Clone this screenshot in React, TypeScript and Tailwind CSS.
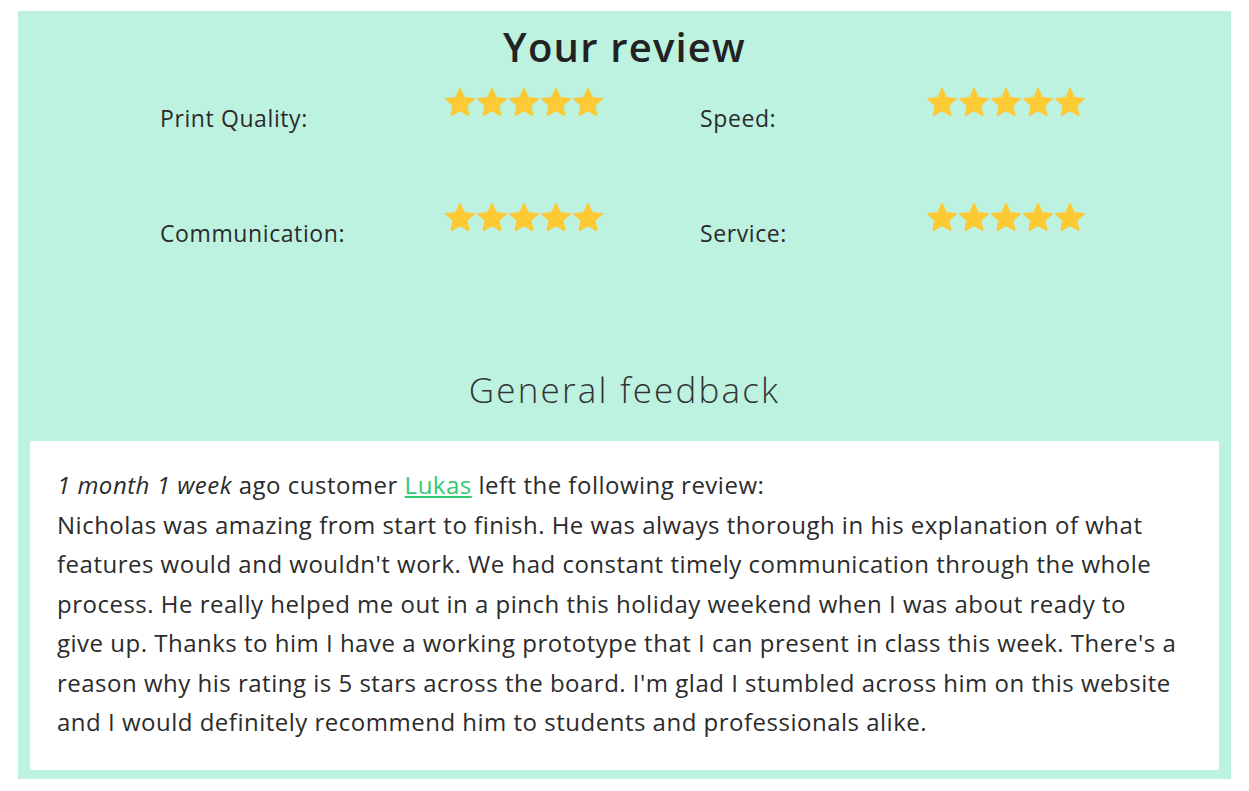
import React from 'react';

const Star = () => (
  <svg width="30" height="28" viewBox="1.6 1.6 20.8 19.6" className="shrink-0">
    <path
      d="M12 2.2l2.9 6.3 6.9.7-5.2 4.6 1.5 6.8L12 17.1l-6.1 3.5 1.5-6.8-5.2-4.6 6.9-.7z"
      fill="#fdc935"
      stroke="#fdc935"
      strokeWidth="1.2"
      strokeLinejoin="round"
    />
  </svg>
);

const Stars = () => (
  <div className="flex gap-[2px]">
    {[0, 1, 2, 3, 4].map((i) => (
      <Star key={i} />
    ))}
  </div>
);

const Rating = ({ label }: { label: string }) => (
  <>
    <div className="pt-[15px] text-[23px] tracking-[0.6px] leading-[30px] text-[#2b2b2b]">{label}</div>
    <Stars />
  </>
);

const lines = [
  'Nicholas was amazing from start to finish. He was always thorough in his explanation of what',
  "features would and wouldn't work. We had constant timely communication through the whole",
  'process. He really helped me out in a pinch this holiday weekend when I was about ready to',
  "give up. Thanks to him I have a working prototype that I can present in class this week. There's a",
  "reason why his rating is 5 stars across the board. I'm glad I stumbled across him on this website",
  'and I would definitely recommend him to students and professionals alike.',
];

const App = () => {
  return (
    <div className="w-full h-[791px] bg-white px-[18px] pt-[11px]" style={{ fontFamily: '"Open Sans", "Noto Sans", sans-serif' }}>
      <div className="bg-[#bdf2e0] px-[12px] pb-[9px]">
        <h1 className="text-center text-[40px] font-semibold tracking-[1.2px] text-[#222] leading-[48px] pt-[12px]">Your review</h1>
        <div className="grid grid-cols-[285px_255px_227px_1fr] gap-y-[70px] pl-[130px] pt-[17px]">
          <Rating label="Print Quality:" />
          <Rating label="Speed:" />
          <Rating label="Communication:" />
          <Rating label="Service:" />
        </div>
        <h2 className="text-center text-[35px] font-light tracking-[2.2px] text-[#333] leading-[42px] mt-[121px] mb-[30px]">General feedback</h2>
        <div className="bg-white rounded-[2px] px-[27px] pt-[24px] pb-[28px] text-[24px] tracking-[0.5px] leading-[39.5px] text-[#2b2b2b]">
          <div className="whitespace-nowrap">
            <i>1 month 1 week</i> ago customer{' '}
            <a href="#" className="text-[#2ecc71] underline">Lukas</a> left the following review:
          </div>
          <p>
            {lines.map((l, i) => (
              <span key={i} className="block whitespace-nowrap">{l}</span>
            ))}
          </p>
        </div>
      </div>
    </div>
  );
};

export default App;
